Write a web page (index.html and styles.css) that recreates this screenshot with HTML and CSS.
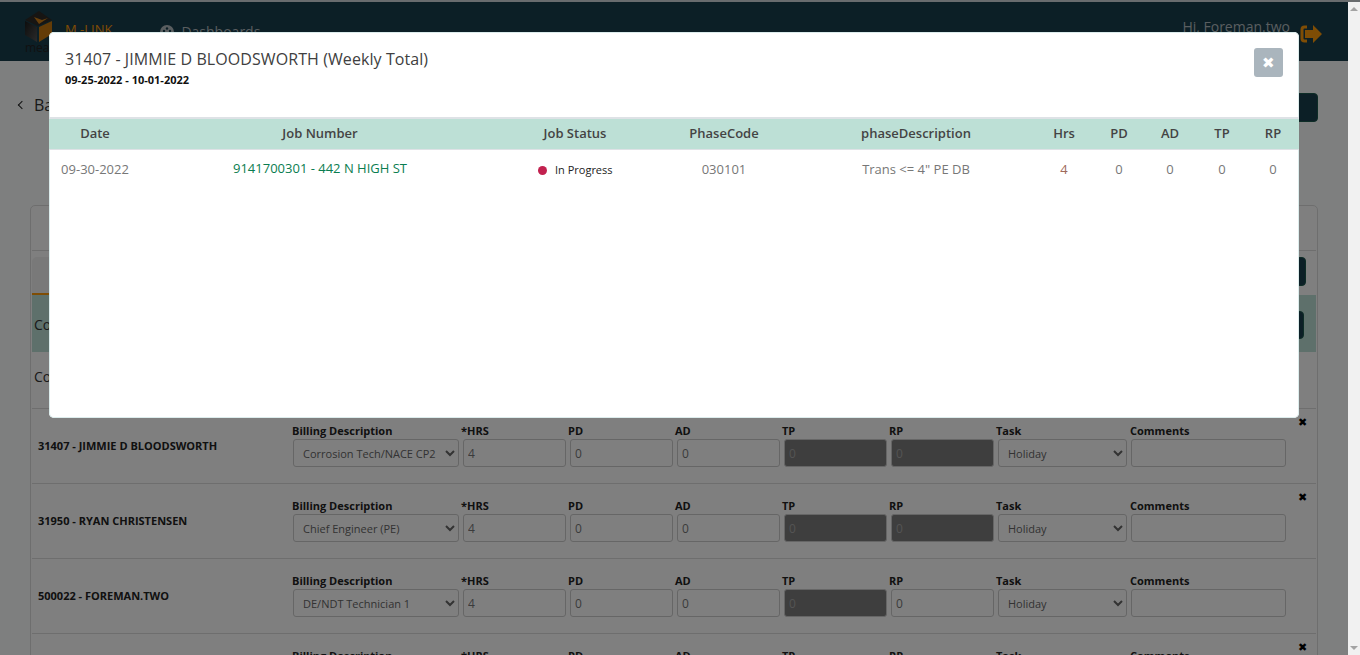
FILE: index.html
```html
<!doctype html>
<html>
<head>
<meta charset="utf-8">
<title>Crew Time</title>
<link rel="stylesheet" href="styles.css">
</head>
<body>
<div class="topline"></div>
<div class="window">
	<div class="main">
		<div class="navbar">
			<div class="logo">
				<svg width="27" height="31" viewBox="0 0 27 31">
					<defs>
						<linearGradient id="side" x1="0" y1="0" x2="1" y2="1">
							<stop offset="0" stop-color="#1a1a1a"/>
							<stop offset="1" stop-color="#555"/>
						</linearGradient>
					</defs>
					<polygon points="14,0 27,9 13,15 0,9" fill="#2e2a26"/>
					<polygon points="9,6 17,9 23,7 14,13" fill="#d07f17"/>
					<polygon points="0,10 12,16 12,31 0,24" fill="url(#side)"/>
					<polygon points="27,10 14,16 14,31 27,23" fill="#c9780f"/>
				</svg>
				<span class="logo_name">mears</span>
			</div>
			<a class="brand" href="#">M -LINK</a>
			<a class="nav_link" href="#">
				<svg width="14" height="14" viewBox="0 0 14 14"><circle cx="7" cy="7" r="7" fill="#b4bcc0"/><circle cx="4" cy="6" r="1.200" fill="#183e4c"/><circle cx="7" cy="3.500" r="1.200" fill="#183e4c"/><circle cx="10" cy="6" r="1.200" fill="#183e4c"/></svg>
				Dashboards
			</a>
			<div class="user">
				<span>Hi, Foreman.two</span>
				<svg width="22" height="18" viewBox="0 0 22 18">
					<path d="M7 2H4.500A2.500 2.500 0 0 0 2 4.500v9A2.500 2.500 0 0 0 4.500 16H7" fill="none" stroke="#fe9a0a" stroke-width="3"/>
					<path d="M5 5h8V0l9 9-9 9v-5H5z" fill="#fe9a0a"/>
				</svg>
			</div>
		</div>

		<div class="backbar">
			<a class="back" href="#"><span class="chevron"></span>Back</a>
			<button class="dark_btn top_btn"></button>
		</div>

		<div class="card">
			<div class="card_head"></div>
			<div class="panel">
				<div class="tabs">
					<div class="tab_active"></div>
					<button class="dark_btn tab_btn"></button>
				</div>
				<div class="info_row teal">Co<button class="dark_btn info_btn"></button></div>
				<div class="info_row plain">Co</div>

				<div class="emp_row">
					<div class="emp_name">31407 - JIMMIE D BLOODSWORTH</div>
					<div class="field wide"><label>Billing Description</label><select><option>Corrosion Tech/NACE CP2</option></select></div>
					<div class="field"><label>*HRS</label><input value="4"></div>
					<div class="field"><label>PD</label><input value="0"></div>
					<div class="field"><label>AD</label><input value="0"></div>
					<div class="field"><label>TP</label><input class="locked" value="0" disabled></div>
					<div class="field"><label>RP</label><input class="locked" value="0" disabled></div>
					<div class="field task"><label>Task</label><select><option>Holiday</option></select></div>
					<div class="field comments"><label>Comments</label><input></div>
					<span class="remove">✖</span>
				</div>
				<div class="emp_row">
					<div class="emp_name">31950 - RYAN CHRISTENSEN</div>
					<div class="field wide"><label>Billing Description</label><select><option>Chief Engineer (PE)</option></select></div>
					<div class="field"><label>*HRS</label><input value="4"></div>
					<div class="field"><label>PD</label><input value="0"></div>
					<div class="field"><label>AD</label><input value="0"></div>
					<div class="field"><label>TP</label><input class="locked" value="0" disabled></div>
					<div class="field"><label>RP</label><input class="locked" value="0" disabled></div>
					<div class="field task"><label>Task</label><select><option>Holiday</option></select></div>
					<div class="field comments"><label>Comments</label><input></div>
					<span class="remove">✖</span>
				</div>
				<div class="emp_row">
					<div class="emp_name">500022 - FOREMAN.TWO</div>
					<div class="field wide"><label>Billing Description</label><select><option>DE/NDT Technician 1</option></select></div>
					<div class="field"><label>*HRS</label><input value="4"></div>
					<div class="field"><label>PD</label><input value="0"></div>
					<div class="field"><label>AD</label><input value="0"></div>
					<div class="field"><label>TP</label><input class="locked" value="0" disabled></div>
					<div class="field"><label>RP</label><input value="0"></div>
					<div class="field task"><label>Task</label><select><option>Holiday</option></select></div>
					<div class="field comments"><label>Comments</label><input></div>
				</div>
				<div class="emp_row">
					<div class="emp_name"></div>
					<div class="field wide"><label>Billing Description</label></div>
					<div class="field"><label>*HRS</label></div>
					<div class="field"><label>PD</label></div>
					<div class="field"><label>AD</label></div>
					<div class="field"><label>TP</label></div>
					<div class="field"><label>RP</label></div>
					<div class="field task"><label>Task</label></div>
					<div class="field comments"><label>Comments</label></div>
					<span class="remove">✖</span>
				</div>
			</div>
		</div>

		<div class="overlay"></div>

		<div class="modal">
			<div class="modal_head">
				<div>
					<h4>31407 - JIMMIE D BLOODSWORTH (Weekly Total)</h4>
					<p>09-25-2022 - 10-01-2022</p>
				</div>
				<button class="close_btn">✖</button>
			</div>
			<table class="week_list">
				<colgroup>
					<col class="c_date"><col class="c_job"><col class="c_status"><col class="c_phase"><col class="c_desc">
					<col class="c_hrs"><col class="c_pd"><col class="c_ad"><col class="c_tp"><col class="c_rp">
				</colgroup>
				<thead>
					<tr><th>Date</th><th class="nudge">Job Number</th><th>Job Status</th><th class="nudge">PhaseCode</th><th class="nudge">phaseDescription</th><th class="nudge">Hrs</th><th class="nudge">PD</th><th>AD</th><th>TP</th><th>RP</th></tr>
				</thead>
				<tbody>
					<tr>
						<td>09-30-2022</td>
						<td class="nudge"><a class="job_link" href="#">9141700301 - 442 N HIGH ST</a></td>
						<td class="status"><i class="dot"></i>In Progress</td>
						<td class="nudge">030101</td>
						<td class="nudge">Trans &lt;= 4" PE DB</td>
						<td class="nudge hrs">4</td>
						<td class="nudge">0</td>
						<td>0</td>
						<td>0</td>
						<td>0</td>
					</tr>
				</tbody>
			</table>
		</div>
	</div>
	<div class="scrollbar">
		<span class="arrow_up"></span>
		<span class="arrow_down"></span>
	</div>
</div>
</body>
</html>
```

FILE: styles.css
```css
* {margin: 0; padding: 0; box-sizing: border-box;}
html, body {
	height: 100%;
	overflow: hidden;
}
body {
	font-family: "Open Sans", sans-serif;
	font-size: 14px;
	color: #212529;
	background: #fff;
}
a {text-decoration: none;}
.topline {
	height: 2px;
	background: #696c6e;
}
.window {
	display: flex;
	height: 653px;
}
.main {
	position: relative;
	width: 1348px;
	overflow: hidden;
	background: #fcffff;
}
.scrollbar {
	flex: 1;
	display: flex;
	flex-direction: column;
	justify-content: space-between;
	align-items: center;
	padding: 5px 0;
	background: #f1f1f1;
}
.arrow_up {
	border: 4px solid transparent;
	border-top: 0;
	border-bottom: 4px solid #a3a3a3;
}
.arrow_down {
	border: 4px solid transparent;
	border-bottom: 0;
	border-top: 4px solid #a3a3a3;
}

/* navbar */
.navbar {
	display: flex;
	align-items: flex-start;
	height: 59px;
	padding-left: 25px;
	background: #183e4c;
}
.logo {
	width: 40px;
	padding-top: 9px;
	line-height: 0;
}
.logo_name {
	display: block;
	font-size: 12px;
	line-height: 12px;
	color: #222;
}
.brand {
	margin-top: 18px;
	font-size: 13px;
	color: #fe9a0a;
}
.nav_link {
	display: flex;
	align-items: center;
	gap: 7px;
	margin-top: 20px;
	margin-left: 48px;
	font-size: 14px;
	color: #b4bcc0;
}
.user {
	display: flex;
	align-items: flex-start;
	gap: 10px;
	margin-left: auto;
	margin-right: 26px;
	margin-top: 15px;
	color: #b4bcc0;
}
.user svg {margin-top: 8px;}

/* page under the dialog */
.backbar {
	display: flex;
	justify-content: space-between;
	align-items: flex-start;
	height: 144px;
	padding: 32px 30px 0 19px;
}
.back {
	display: flex;
	align-items: center;
	gap: 9px;
	margin-top: 1px;
	font-size: 16px;
	color: #333;
}
.chevron {
	width: 6px;
	height: 6px;
	border-left: 1px solid #222;
	border-bottom: 1px solid #222;
	transform: rotate(45deg);
}
.dark_btn {
	border: 1px solid #1d5a4e;
	border-radius: 4px;
	background: #183e4c;
}
.top_btn {
	width: 60px;
	height: 29px;
}
.card {
	margin: 0 30px;
	border: 1px solid #ddd;
	border-radius: 5px;
	background: #fff;
}
.card_head {height: 44px;}
.panel {
	margin: 0 1px;
	border-top: 1px solid #ddd;
}
.tabs {
	display: flex;
	justify-content: space-between;
	height: 44px;
	padding: 6px 10px 0 0;
}
.tab_active {
	width: 200px;
	height: 38px;
	border-bottom: 2px solid #fe9a0a;
	border-radius: 5px 0 0 0;
	background: #f2f2f2;
}
.tab_btn {
	width: 60px;
	height: 29px;
}
.info_row {
	display: flex;
	justify-content: space-between;
	align-items: center;
	height: 57px;
	padding: 0 12px 0 2px;
	font-size: 14px;
	color: #333;
}
.teal {
	padding-top: 2px;
	background: #bde0d6;
}
.plain {
	height: 56px;
	padding-bottom: 8px;
}
.info_btn {
	width: 60px;
	height: 28px;
}
.emp_row {
	display: grid;
	grid-template-columns: 254px 169px repeat(5, 107px) 134px 156px 1fr;
	height: 75px;
	padding-left: 6px;
	border-top: 1px solid #ddd;
}
.emp_name {
	align-self: center;
	margin-top: -1px;
	font-size: 11px;
	font-weight: 700;
	color: #222;
}
.field {padding-top: 14px;}
.field label {
	display: block;
	height: 16px;
	font-size: 11px;
	line-height: 16px;
	font-weight: 700;
	color: #222;
}
.field input, .field select {
	display: block;
	width: 103px;
	height: 28px;
	margin-left: 2px;
	padding: 0 4px;
	border: 1px solid #ccc;
	border-radius: 3px;
	font-family: "Open Sans", sans-serif;
	font-size: 12px;
	color: #777;
	background: #fff;
}
.field select {
	padding-left: 5px;
	font-size: 11px;
	color: #666;
}
.wide select {
	width: 166px;
	margin-left: 1px;
}
.task select {width: 129px;}
.comments input {
	width: 155px;
	margin-left: 1px;
}
.field input.locked {
	color: #a8a8a8;
	background: #7c7c7c;
}
.remove {
	justify-self: center;
	margin-top: 5px;
	margin-left: 2px;
	font-size: 11px;
	line-height: 16px;
	color: #000;
}

/* dialog */
.overlay {
	position: absolute;
	top: 0;
	left: 0;
	width: 100%;
	height: 100%;
	background: rgba(0,0,0,.5);
}
.modal {
	position: absolute;
	top: 30px;
	left: 49px;
	width: 1250px;
	height: 386px;
	border-radius: 5px;
	background: #fff;
	box-shadow: inset 0 0 0 1px #dcecec;
}
.modal_head {
	display: flex;
	justify-content: space-between;
	height: 85px;
	padding: 16px 16px 0 16px;
}
.modal_head h4 {
	font-size: 16px;
	line-height: 23px;
	font-weight: 500;
	letter-spacing: .08px;
	color: #404040;
}
.modal_head p {
	font-size: 11px;
	line-height: 18px;
	font-weight: 700;
	color: #111;
}
.close_btn {
	width: 29px;
	height: 29px;
	border: 0;
	border-radius: 3px;
	font-size: 15px;
	color: #fff;
	background: #aab5bd;
}
.week_list {
	width: 100%;
	table-layout: fixed;
	border-collapse: separate;
	border-spacing: 0;
}
.c_date {width: 92px;}
.c_job {width: 356px;}
.c_status {width: 156px;}
.c_phase {width: 140px;}
.c_desc {width: 244px;}
.c_hrs {width: 52px;}
.c_pd {width: 58px;}
.c_ad {width: 46px;}
.c_tp {width: 58px;}
.c_rp {width: 48px;}
.week_list th {
	height: 33px;
	padding-bottom: 2px;
	border-top: 2px solid #dee2e6;
	border-bottom: 1px solid #dee2e6;
	font-size: 13px;
	font-weight: 600;
	color: #444;
	background: #bde0d6;
}
.week_list th:last-child, .week_list td:last-child {padding-right: 4px;}
.week_list td {
	height: 38px;
	font-size: 13px;
	text-align: center;
	color: #777;
}
.week_list .nudge {padding-left: 2px;}
.week_list td.hrs {color: #a06a5a;}
.job_link {
	position: relative;
	top: -1px;
	color: #0a7d50;
}
.week_list td.status {
	padding-left: 41px;
	text-align: left;
	font-size: 11px;
	color: #222;
}
.dot {
	display: inline-block;
	width: 9px;
	height: 9px;
	margin-right: 8px;
	border-radius: 50%;
	vertical-align: -1px;
	background: #c2214f;
}
```
